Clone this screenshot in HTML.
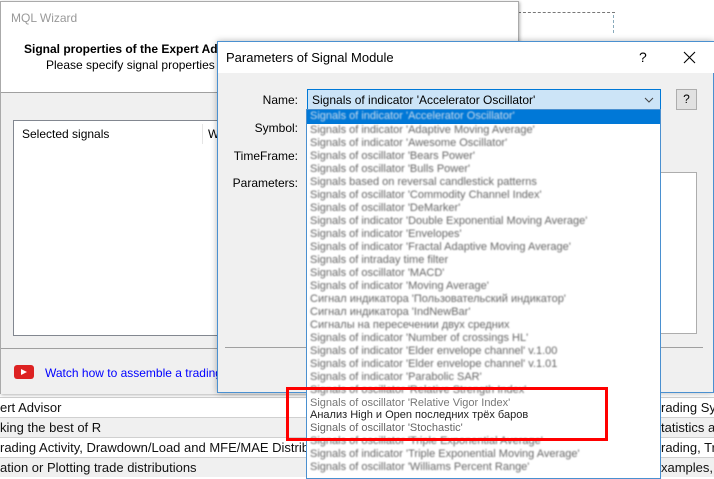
<!DOCTYPE html>
<html><head><meta charset="utf-8"><style>
*{margin:0;padding:0;box-sizing:border-box}
body{width:714px;height:476px;overflow:hidden;background:#fff;font-family:"Liberation Sans","Noto Sans CJK SC",sans-serif;font-size:12px;color:#000;position:relative}
.a{position:absolute}
.row{position:absolute;left:0;width:714px;height:20px;border-top:1px solid #d0d0d0;font-size:13px;line-height:19px;color:#111;overflow:hidden;white-space:nowrap}
.row span{white-space:nowrap}
.it{position:absolute;left:3px;white-space:nowrap;font-size:11px;line-height:13px;color:#666;filter:blur(0.8px)}
</style></head><body>
<div class="a" style="left:518px;top:12px;width:97px;border-top:1px dashed #777"></div>
<div class="a" style="left:613px;top:15px;height:18px;border-left:1px dashed #8ab"></div>
<div class="row" style="top:397px;background:#fff"><span class="a" style="left:0">ert Advisor</span><span class="a" style="left:661px">rading Sys</span></div>
<div class="row" style="top:417px;background:#f0f0f0"><span class="a" style="left:0">king the best of R</span><span class="a" style="left:661px">tatistics ar</span></div>
<div class="row" style="top:437px;background:#fff"><span class="a" style="left:0">rading Activity, Drawdown/Load and MFE/MAE Distribution</span><span class="a" style="left:661px;background:#fff;padding-right:20px">rading, Tra</span></div>
<div class="row" style="top:457px;background:#f0f0f0"><span class="a" style="left:0">ation or Plotting trade distributions</span><span class="a" style="left:661px">xamples, T</span></div>
<div class="a" style="left:0;top:1px;width:519px;height:393px;background:#fff;border:1px solid #aaa;box-shadow:1px 1px 3px rgba(0,0,0,.3)">
 <div class="a" style="left:10px;top:9px;font-size:12px;color:#999">MQL Wizard</div>
 <div class="a" style="left:23px;top:40px;font-weight:bold;font-size:12px">Signal properties of the Expert Advisor</div>
 <div class="a" style="left:45px;top:56px;font-size:12px;white-space:nowrap">Please specify signal properties of the Expert Advisor</div>
 <div class="a" style="left:0;top:90px;width:518px;height:302px;background:#f0f0f0;border-top:1px solid #a0a0a0">
  <div class="a" style="left:12px;top:27px;width:500px;height:216px;background:#fff;border:1px solid #828790">
   <div class="a" style="left:8px;top:6px">Selected signals</div>
   <div class="a" style="left:188px;top:3px;height:20px;border-left:1px solid #e5e5e5"></div>
   <div class="a" style="left:194px;top:6px">W</div>
  </div>
  <div class="a" style="left:0;top:255px;width:518px;border-top:1px solid #a0a0a0"></div>
  <div class="a" style="left:13px;top:272px;width:20px;height:14px;background:#d22;border-radius:3px"></div>
  <div class="a" style="left:20px;top:276px;width:0;height:0;border-left:6px solid #fff;border-top:3.5px solid transparent;border-bottom:3.5px solid transparent"></div>
  <div class="a" style="left:44px;top:273px;color:#00f;white-space:nowrap">Watch how to assemble a trading robot</div>
 </div>
</div>
<div class="a" style="left:217px;top:41px;width:497px;height:352px;background:#f0f0f0;border:1px solid #4a90d0;box-shadow:0 0 6px rgba(0,0,0,.3)">
 <div class="a" style="left:0;top:0;width:496px;height:31px;background:#fff"></div>
 <div class="a" style="left:8px;top:8px;font-size:13px">Parameters of Signal Module</div>
 <div class="a" style="left:421px;top:7px;font-size:14px">?</div>
 <svg class="a" style="left:465px;top:9px" width="13" height="13" viewBox="0 0 13 13"><path d="M1 1L12 12M12 1L1 12" stroke="#000" stroke-width="1.1"/></svg>
 <div class="a" style="left:0;top:51px;width:80px;text-align:right">Name:</div>
 <div class="a" style="left:0;top:79px;width:80px;text-align:right">Symbol:</div>
 <div class="a" style="left:0;top:107px;width:80px;text-align:right">TimeFrame:</div>
 <div class="a" style="left:0;top:134px;width:80px;text-align:right">Parameters:</div>
 <div class="a" style="left:89px;top:47px;width:354px;height:21px;background:#cce4f7;border:1px solid #0078d7">
  <span class="a" style="left:4px;top:3px;white-space:nowrap">Signals of indicator 'Accelerator Oscillator'</span>
  <svg class="a" style="left:336px;top:7px" width="10" height="6" viewBox="0 0 10 6"><path d="M1 1L5 5L9 1" stroke="#444" fill="none"/></svg>
 </div>
 <div class="a" style="left:458px;top:47px;width:21px;height:21px;background:#e1e1e1;border:1px solid #adadad;text-align:center;line-height:19px">?</div>
 <div class="a" style="left:440px;top:130px;width:39px;height:162px;background:#fff;border:1px solid #adadad"></div>
 <div class="a" style="left:7px;top:305px;width:478px;border-top:1px solid #a0a0a0"></div>
</div>
<div class="a" style="left:306px;top:109px;width:355px;height:370px;background:#fff;border:1px solid #4a90d0;overflow:hidden">
 <div class="a" style="left:0;top:0;width:353px;height:14px;background:#0078d7"></div>
 <div class="it" style="top:0;color:#cde">Signals of indicator 'Accelerator Oscillator'</div>
 <div class="it" style="top:14px">Signals of indicator 'Adaptive Moving Average'</div>
 <div class="it" style="top:27px">Signals of indicator 'Awesome Oscillator'</div>
 <div class="it" style="top:40px">Signals of oscillator 'Bears Power'</div>
 <div class="it" style="top:53px">Signals of oscillator 'Bulls Power'</div>
 <div class="it" style="top:66px">Signals based on reversal candlestick patterns</div>
 <div class="it" style="top:79px">Signals of oscillator 'Commodity Channel Index'</div>
 <div class="it" style="top:92px">Signals of oscillator 'DeMarker'</div>
 <div class="it" style="top:105px">Signals of indicator 'Double Exponential Moving Average'</div>
 <div class="it" style="top:118px">Signals of indicator 'Envelopes'</div>
 <div class="it" style="top:131px">Signals of indicator 'Fractal Adaptive Moving Average'</div>
 <div class="it" style="top:144px">Signals of intraday time filter</div>
 <div class="it" style="top:157px">Signals of oscillator 'MACD'</div>
 <div class="it" style="top:170px">Signals of indicator 'Moving Average'</div>
 <div class="it" style="top:183px">Сигнал индикатора 'Пользовательский индикатор'</div>
 <div class="it" style="top:196px">Сигнал индикатора 'IndNewBar'</div>
 <div class="it" style="top:209px">Сигналы на пересечении двух средних</div>
 <div class="it" style="top:222px">Signals of indicator 'Number of crossings HL'</div>
 <div class="it" style="top:235px">Signals of indicator 'Elder envelope channel' v.1.00</div>
 <div class="it" style="top:248px">Signals of indicator 'Elder envelope channel' v.1.01</div>
 <div class="it" style="top:261px">Signals of indicator 'Parabolic SAR'</div>
 <div class="it" style="top:274px">Signals of oscillator 'Relative Strength Index'</div>
 <div class="it" style="top:287px;filter:none;color:#777">Signals of oscillator 'Relative Vigor Index'</div>
 <div class="it" style="top:299px;filter:none;color:#222">Анализ High и Open последних трёх баров</div>
 <div class="it" style="top:312px;filter:none;color:#666">Signals of oscillator 'Stochastic'</div>
 <div class="it" style="top:325px">Signals of oscillator 'Triple Exponential Average'</div>
 <div class="it" style="top:338px">Signals of indicator 'Triple Exponential Moving Average'</div>
 <div class="it" style="top:351px">Signals of oscillator 'Williams Percent Range'</div>
</div>
<div class="a" style="left:286px;top:387px;width:322px;height:54px;border:3px solid #f00"></div>
</body></html>
